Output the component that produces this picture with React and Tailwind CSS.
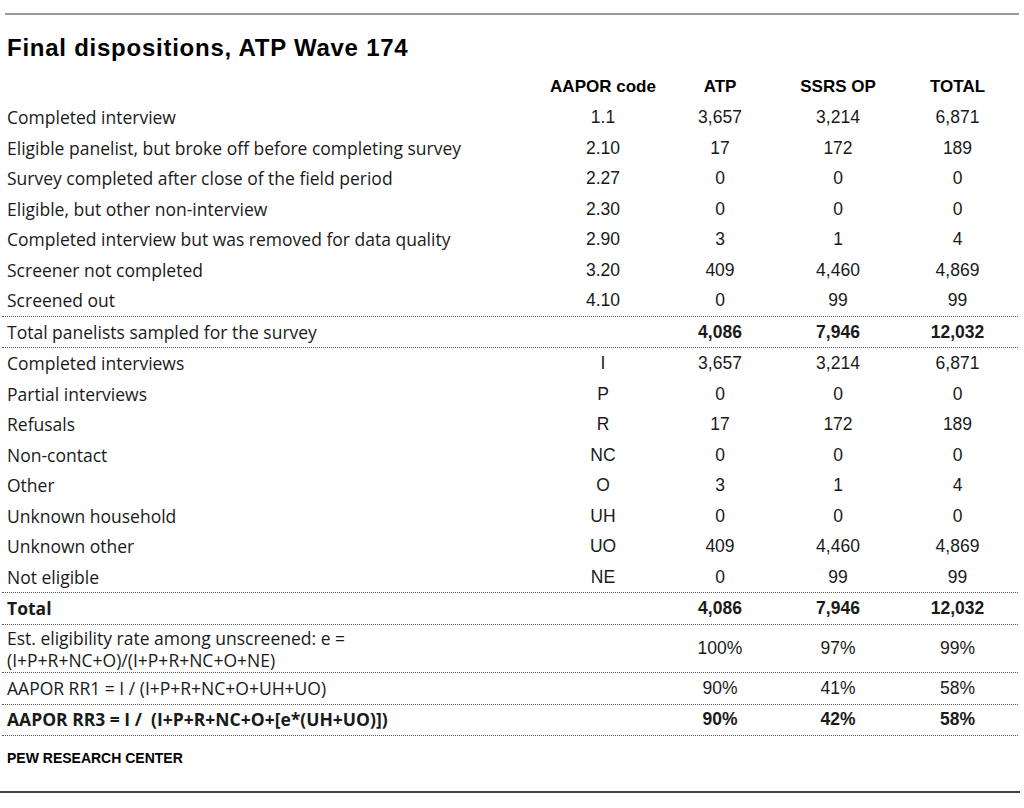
const rows1 = [
  ["Completed interview", "1.1", "3,657", "3,214", "6,871"],
  ["Eligible panelist, but broke off before completing survey", "2.10", "17", "172", "189"],
  ["Survey completed after close of the field period", "2.27", "0", "0", "0"],
  ["Eligible, but other non-interview", "2.30", "0", "0", "0"],
  ["Completed interview but was removed for data quality", "2.90", "3", "1", "4"],
  ["Screener not completed", "3.20", "409", "4,460", "4,869"],
  ["Screened out", "4.10", "0", "99", "99"],
];

const rows2 = [
  ["Completed interviews", "I", "3,657", "3,214", "6,871"],
  ["Partial interviews", "P", "0", "0", "0"],
  ["Refusals", "R", "17", "172", "189"],
  ["Non-contact", "NC", "0", "0", "0"],
  ["Other", "O", "3", "1", "4"],
  ["Unknown household", "UH", "0", "0", "0"],
  ["Unknown other", "UO", "409", "4,460", "4,869"],
  ["Not eligible", "NE", "0", "99", "99"],
];

const grid = "grid grid-cols-[543px_116px_118px_118px_121px] items-center";
const label = "pl-[5px] text-[17.5px] text-[#1a1a1a] font-['Open_Sans',sans-serif]";
const num = "text-center text-[17.5px] text-[#1a1a1a] font-['Liberation_Sans',Arial,sans-serif]";

function Row({ r, bold, boldNums, className = "" }) {
  return (
    <div className={`${grid} ${className}`}>
      <div className={`${label} ${bold ? "font-bold" : ""}`}>{r[0]}</div>
      {r.slice(1).map((v, i) => (
        <div key={i} className={`${num} ${bold || boldNums ? "font-bold" : ""}`}>{v}</div>
      ))}
    </div>
  );
}

const Dots = () => <div className="border-t border-dotted border-[#555]" />;

export default function App() {
  return (
    <div className="w-[1024px] h-[808px] bg-white relative overflow-hidden">
      <div className="mx-[5px] pt-[13px]">
        <div className="border-t-[2px] border-[#999]" />
      </div>
      <h1 className="pl-[7px] mt-[19px] text-[24px] leading-[28px] tracking-[0.75px] font-bold text-black font-['Liberation_Sans',Arial,sans-serif]">
        Final dispositions, ATP Wave 174
      </h1>

      <div className="ml-[2px] w-[1016px] mt-[10px]">
        <div className={`${grid} h-[30px]`}>
          <div />
          {["AAPOR code", "ATP", "SSRS OP", "TOTAL"].map((h) => (
            <div key={h} className="text-center text-[17px] font-bold text-black font-['Liberation_Sans',Arial,sans-serif]">{h}</div>
          ))}
        </div>
        {rows1.map((r) => (
          <Row key={r[0]} r={r} className="h-[30.5px]" />
        ))}
        <Dots />
        <Row r={["Total panelists sampled for the survey", "", "4,086", "7,946", "12,032"]} boldNums className="h-[30.5px]" />
        <Dots />
        {rows2.map((r) => (
          <Row key={r[0]} r={r} className="h-[30.5px]" />
        ))}
        <Dots />
        <Row r={["Total", "", "4,086", "7,946", "12,032"]} bold className="h-[31px]" />
        <Dots />
        <Row
          r={[
            <span key="a" className="block leading-[22px]">Est. eligibility rate among unscreened: e =<br />(I+P+R+NC+O)/(I+P+R+NC+O+NE)</span>,
            "",
            "100%",
            "97%",
            "99%",
          ]}
          className="h-[47px]"
        />
        <Dots />
        <Row r={["AAPOR RR1 = I / (I+P+R+NC+O+UH+UO)", "", "90%", "41%", "58%"]} className="h-[31px]" />
        <Dots />
        <Row r={["AAPOR RR3 = I /  (I+P+R+NC+O+[e*(UH+UO)])", "", "90%", "42%", "58%"]} bold className="h-[30px] pb-[2px] whitespace-pre" />
        <Dots />
      </div>

      <div className="pl-[7px] mt-[12px] text-[14px] font-bold text-black font-['Liberation_Sans',Arial,sans-serif]">
        PEW RESEARCH CENTER
      </div>
      <div className="mt-[22px] w-[1020px] border-t-[2px] border-[#444]" />
    </div>
  );
}
